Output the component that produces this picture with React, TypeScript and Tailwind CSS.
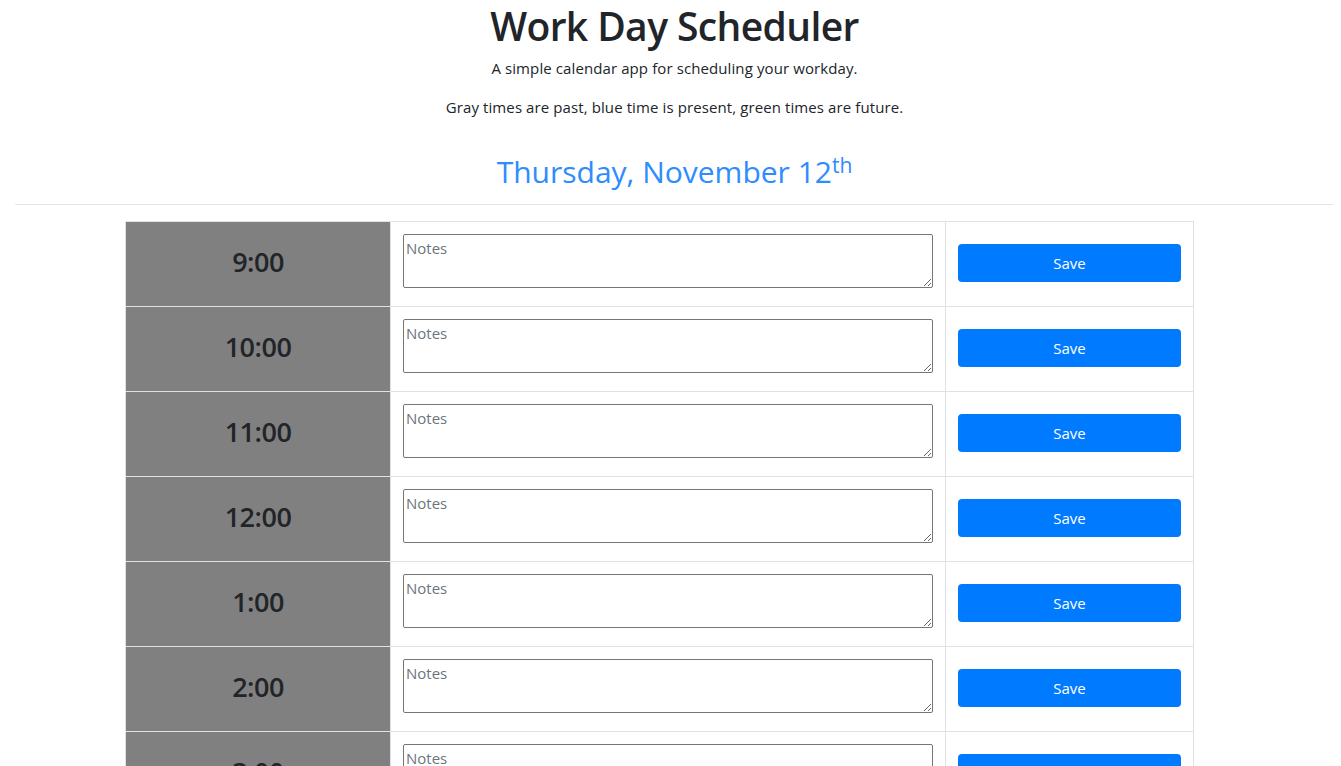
const hours = ["9:00", "10:00", "11:00", "12:00", "1:00", "2:00", "3:00", "4:00", "5:00"];

export default function App() {
  return (
    <div
      className="min-h-screen bg-white text-[#212529]"
      style={{ fontFamily: '"Open Sans", "Noto Sans", sans-serif' }}
    >
      <header className="text-center pt-[2px] pl-[8px]">
        <h1 className="text-[39px] leading-[48px] font-semibold tracking-[-0.6px]">Work Day Scheduler</h1>
        <p className="text-[15px] leading-6 mt-[6px] tracking-[0.1px]">A simple calendar app for scheduling your workday.</p>
        <p className="text-[15px] leading-6 mt-[15px] tracking-[0.1px]">
          Gray times are past, blue time is present, green times are future.
        </p>
        <p className="text-[30px] leading-[40px] text-[#2e8cff] mt-[33px]">
          Thursday, November 12<sup className="text-[21px]">th</sup>
        </p>
      </header>
      <hr className="mt-[12px] ml-[15px] mr-[8px] border-t border-[#e5e5e5]" />
      <div className="ml-[125px] mt-[16px] w-[1069px] border-x border-b border-[#dee2e6]">
        {hours.map((h) => (
          <div key={h} className="flex h-[85px] border-t border-[#dee2e6]">
            <div className="w-[264px] bg-[#808080] flex items-center justify-center">
              <span className="text-[27px] font-semibold tracking-[-0.5px] text-[#212529] pb-[4px]">{h}</span>
            </div>
            <div className="w-[555px] border-l border-[#dee2e6] pl-[12px] pt-[12px]">
              <textarea
                placeholder="Notes"
                className="w-[530px] h-[54px] border border-[#767676] rounded-[2px] px-[2px] pt-[3px] text-[15px] leading-5 placeholder:text-[#6c757d] outline-none"
              />
            </div>
            <div className="flex-1 border-l border-[#dee2e6] pl-[12px] pt-[22px]">
              <button className="w-[223px] h-[38px] bg-[#007bff] text-white text-[15px] rounded-[4px]">
                Save
              </button>
            </div>
          </div>
        ))}
      </div>
    </div>
  );
}
